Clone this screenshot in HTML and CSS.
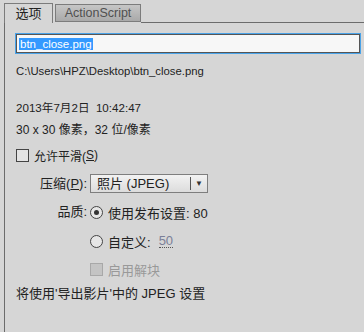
FILE: index.html
```html
<!DOCTYPE html>
<html lang="zh-CN">

<head>
    <meta charset="UTF-8">
    <title>位图属性</title>
    <link rel="stylesheet" href="styles.css">
</head>

<body>
    <div class="tabs">
        <div class="tab active">选项</div>
        <div class="tab">ActionScript</div>
        <div class="tab_fill"></div>
    </div>

    <div class="panel">
        <div class="name_field"><span class="sel">btn_close.png</span></div>
        <p class="path">C:\Users\HPZ\Desktop\btn_close.png</p>
        <p class="date">2013年7月2日&nbsp;&nbsp;10:42:47</p>
        <p class="size">30 x 30 像素，32 位/像素</p>

        <div class="check smooth"><span class="box"></span>允许平滑(<u>S</u>)</div>

        <!-- 压缩 / 品质 -->
        <div class="form">
            <div class="lbl compress_lbl">压缩(<u>P</u>):</div>
            <div class="select">
                <span class="select_text">照片 (JPEG)</span>
                <span class="select_arrow">▼</span>
            </div>

            <div class="lbl quality_lbl">品质:</div>
            <div class="radio_row quality_row"><span class="radio on"></span>使用发布设置: 80</div>

            <div></div>
            <div class="radio_row custom_row"><span class="radio"></span>自定义:<span class="num">50</span></div>

            <div></div>
            <div class="check deblock"><span class="box off"></span>启用解块</div>
        </div>

        <p class="note">将使用'导出影片'中的 JPEG 设置</p>
    </div>
</body>

</html>
```

FILE: styles.css
```css
body,
div,
p {
    margin: 0;
    padding: 0;
}

body {
    background: #d6d6d6;
    font-family: "Liberation Sans", "Noto Sans CJK SC", sans-serif;
    font-size: 12px;
    color: #222;
    width: 364px;
    height: 332px;
    overflow: hidden;
}

.tabs {
    display: flex;
    align-items: flex-end;
    height: 23px;
    padding-left: 4px;
}

.tab {
    box-sizing: border-box;
    width: 86px;
    height: 18px;
    margin-bottom: 1px;
    border: 1px solid #7c7c7c;
    background: linear-gradient(#c6c6c6, #a9a9a9);
    color: #505050;
    font-size: 12.5px;
    line-height: 16px;
    text-align: center;
    margin-left: 2px;
}

.tab.active {
    height: 20px;
    width: 49px;
    margin: 0;
    border-bottom: 0;
    background: #d6d6d6;
    color: #222;
    font-size: 13px;
    line-height: 19px;
}

.tab_fill {
    flex: 1;
    border-bottom: 1px solid #6c6c6c;
}

.panel {
    margin-left: 4px;
    height: 309px;
    border-left: 1px solid #6c6c6c;
    padding: 10px 3px 0 10px;
}

.name_field {
    height: 21px;
    box-sizing: border-box;
    border: 1px solid #4aa3e8;
    box-shadow: inset 0 0 0 1px #555;
    background: #f7f7f7;
    padding: 3px 0 0 3px;
    font-size: 11.5px;
    line-height: 14px;
}

.sel {
    background: #3399ff;
    color: #fff;
    padding: 0 1px;
}

.path,
.date,
.size,
.note {
    line-height: 16px;
    padding-left: 1px;
}

.path {
    margin-top: 9px;
    font-size: 11.3px;
}

.date {
    margin-top: 21px;
    font-size: 11.6px;
}

.size {
    margin-top: 6px;
}

.check,
.radio_row {
    display: flex;
    align-items: center;
    height: 16px;
}

.smooth {
    margin-top: 9px;
    padding-left: 1px;
}

.box {
    width: 11px;
    height: 11px;
    border: 1px solid #444;
    background: #e4e4e4;
    margin-right: 5px;
}

.box.off {
    border-color: #a8a8a8;
    background: #c4c4c4;
}

.form {
    display: grid;
    grid-template-columns: 72px auto;
    column-gap: 3px;
    justify-content: start;
    align-items: center;
    margin-top: 11px;
}

.lbl {
    text-align: right;
    line-height: 16px;
    font-size: 13px;
}

.select {
    display: flex;
    align-items: center;
    box-sizing: border-box;
    width: 118px;
    height: 19px;
    border: 1px solid #7e7e7e;
    background: linear-gradient(#f2f2f2, #dcdcdc);
    font-size: 13px;
}

.select_text {
    flex: 1;
    padding-left: 6px;
    height: 13px;
    line-height: 13px;
    border-right: 1px solid #555;
    margin-right: 4px;
}

.select_arrow {
    font-size: 8px;
    width: 12px;
    color: #333;
}

.quality_lbl,
.quality_row {
    margin-top: 11px;
}

.radio_row {
    font-size: 13px;
}

.radio {
    box-sizing: border-box;
    width: 13px;
    height: 13px;
    border: 1px solid #444;
    border-radius: 50%;
    background: #e6e6e6;
    margin-right: 5px;
    display: flex;
    align-items: center;
    justify-content: center;
}

.radio.on::after {
    content: "";
    width: 5px;
    height: 5px;
    border-radius: 50%;
    background: #333;
}

.custom_row {
    margin-top: 13px;
}

.num {
    margin-left: 8px;
    color: #7a7f98;
    border-bottom: 1px dotted #555;
    line-height: 13px;
}

.deblock {
    margin-top: 12px;
    color: #999;
    font-size: 13px;
}

.note {
    margin-top: 9px;
    font-size: 13px;
}
```
